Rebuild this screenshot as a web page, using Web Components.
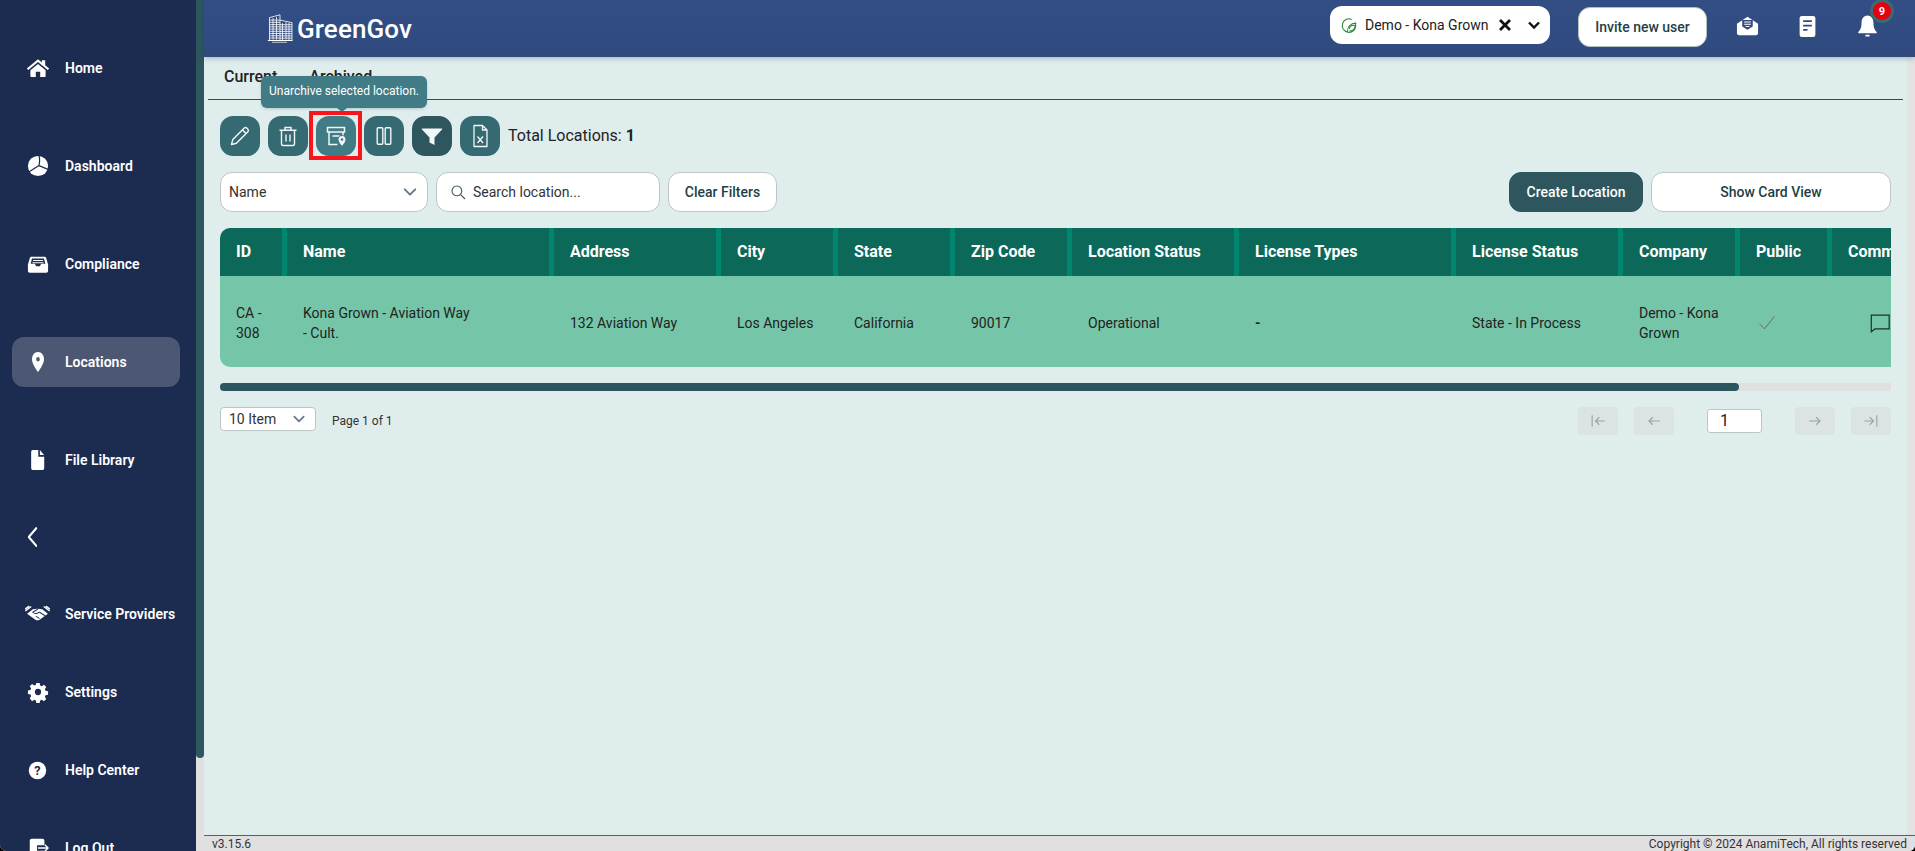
<!DOCTYPE html>
<html lang="en">
<head>
<meta charset="utf-8">
<title>GreenGov - Locations</title>
<style>
  html, body { margin: 0; height: 100%; background: #000; overflow: hidden; }
  body { font-family: Roboto, "Liberation Sans", sans-serif; color: #222; }
</style>
</head>
<body>
<gg-app>
  <gg-sidebar slot="sidebar">
    <gg-nav-item icon="home">Home</gg-nav-item>
    <gg-nav-item icon="pie">Dashboard</gg-nav-item>
    <gg-nav-item icon="tray">Compliance</gg-nav-item>
    <gg-nav-item icon="pin" active>Locations</gg-nav-item>
    <gg-nav-item icon="file">File Library</gg-nav-item>
    <gg-nav-item slot="back" icon="back"></gg-nav-item>
    <gg-nav-item slot="lower" icon="handshake">Service Providers</gg-nav-item>
    <gg-nav-item slot="lower" icon="gear">Settings</gg-nav-item>
    <gg-nav-item slot="lower" icon="help">Help Center</gg-nav-item>
    <gg-nav-item slot="lower" icon="logout">Log Out</gg-nav-item>
  </gg-sidebar>
  <gg-header slot="header"></gg-header>
  <gg-tabs>
    <span>Current</span>
    <span>Archived</span>
  </gg-tabs>
  <gg-toolbar>
    <gg-tool-button icon="pencil"></gg-tool-button>
    <gg-tool-button icon="trash"></gg-tool-button>
    <gg-tool-button icon="unarchive" hovered tip="Unarchive selected location."></gg-tool-button>
    <gg-tool-button icon="columns"></gg-tool-button>
    <gg-tool-button icon="funnel" dark></gg-tool-button>
    <gg-tool-button icon="excel"></gg-tool-button>
    <span slot="total">Total Locations: <b>1</b></span>
  </gg-toolbar>
  <gg-filters></gg-filters>
  <gg-table></gg-table>
  <gg-pager></gg-pager>
  <gg-footer slot="footer"></gg-footer>
</gg-app>

<script>
const ICONS = {
  home: '<path fill="currentColor" d="M12 2.5 .8 12.6l1.5 1.6L12 5.5l9.7 8.7 1.5-1.6-4-3.6V3.6h-3.4V6z"/><path fill="currentColor" d="M12 7.6 4.4 14.4v6.2c0 .7.4 1.1 1.1 1.1h4.3v-5.5h4.4v5.5h4.3c.7 0 1.1-.4 1.1-1.1v-6.2z"/>',
  pie: '<circle cx="12" cy="12" r="11" fill="currentColor"/><path fill="none" stroke="#1c2b50" stroke-width="1.3" d="M13 0C14 4 14 8 13 11.5L23.5 16M13 11.5 2 18.5"/>',
  tray: '<path fill="currentColor" d="M5 3h14c1 0 1.5.5 1.8 1.3L23 12v7.5c0 1.2-.8 2-2 2H3c-1.2 0-2-.8-2-2V12l2.2-7.7C3.5 3.5 4 3 5 3z"/><path fill="#1c2b50" d="M5.5 5h13l1.5 6h-4.500l-1.500 3h-4l-1.500-3H4z"/><path fill="currentColor" d="M6.500 6.800h11V8h-11zM6 9.300h12v1.200H6z"/>',
  pin: '<path fill="currentColor" fill-rule="evenodd" d="M12 1C7 1 4 4.800 4 9c0 5 5.500 11 8 14 2.500-3 8-9 8-14 0-4.200-3-8-8-8zm0 5.600a2.400 2.400 0 1 1 0 4.800 2.400 2.400 0 0 1 0-4.800z"/>',
  file: '<path fill="currentColor" d="M6 1h7v7.500h7.500V21a2 2 0 0 1-2 2H6a2 2 0 0 1-2-2V3a2 2 0 0 1 2-2z"/><path fill="currentColor" d="M15 1.200 20.300 6.500H15z"/>',
  back: '<path fill="none" stroke="currentColor" stroke-width="2.800" stroke-linecap="round" stroke-linejoin="round" d="M18 2.500 6 12l12 9.500"/>',
  handshake: '<path fill="currentColor" d="M7.500 5.500 12 5l4.500.5L22 11.500l-8 8c-1.100 1-2.900 1-4 0l-8-8z"/><path fill="none" stroke="#1c2b50" stroke-width="1.200" stroke-linejoin="round" d="M12.500 5.500 7.500 9.500c1 2 3 2.200 4.500 1.200l1.800-1.200 5.700 5M14 18l-3.500-3"/><path fill="none" stroke="currentColor" stroke-width="1.600" stroke-linecap="round" d="M5.500 2.500 .8 7.500M3.500 2 .5 5M18.500 2.500l4.700 5M20.500 2l3 3"/>',
  gear: '<path fill="currentColor" fill-rule="evenodd" d="M10 1h4l.6 3 2 .9 2.600-1.700 2.800 2.800-1.700 2.600.9 2 3 .6v4l-3 .6-.9 2 1.700 2.600-2.800 2.800-2.600-1.700-2 .9-.6 3h-4l-.6-3-2-.9-2.600 1.700L2 19.500l1.700-2.600-.9-2-3-.6v-4l3-.6.9-2L2 5.100l2.800-2.800 2.600 1.700 2-.9zm2 7.200a3.800 3.800 0 1 0 0 7.600 3.800 3.800 0 0 0 0-7.600z" transform="translate(1.2 1.2) scale(.9)"/>',
  help: '<circle cx="12" cy="12" r="11" fill="currentColor"/><text x="12" y="17.600" text-anchor="middle" font-family="Roboto, sans-serif" font-weight="700" font-size="16" fill="#1c2b50">?</text>',
  logout: '<path fill="currentColor" d="M5 2h12a2 2 0 0 1 2 2v5h-8v6h8v5a2 2 0 0 1-2 2H5a2 2 0 0 1-2-2V4a2 2 0 0 1 2-2z"/><path fill="none" stroke="currentColor" stroke-width="1.600" d="M12 12h11M19.500 8.500 23 12l-3.500 3.500"/>',
  pencil: '<path fill="none" stroke="currentColor" stroke-width="1.400" stroke-linejoin="round" d="M3.500 20.500l1.300-4.900L16.300 4.100a1.800 1.800 0 0 1 2.500 0l1.100 1.100a1.800 1.800 0 0 1 0 2.500L8.400 19.200zM14.500 5.900l3.600 3.600"/>',
  trash: '<path fill="none" stroke="currentColor" stroke-width="1.400" d="M5.500 6.500V20a1.500 1.500 0 0 0 1.500 1.500h10a1.500 1.500 0 0 0 1.500-1.500V6.500M3.500 6.200h17M9 6V3.500h6V6M10 10.500v7M14 10.500v7"/>',
  unarchive: '<path fill="none" stroke="currentColor" stroke-width="1.500" d="M3.500 3.500h17V8h-17zM5 8v12.500h8.500M19 8v5M8.500 12h7"/>',
  columns: '<rect x="5.200" y="3.700" width="5.600" height="16.600" rx="1" fill="none" stroke="currentColor" stroke-width="1.400"/><rect x="13.200" y="3.700" width="5.600" height="16.600" rx="1" fill="none" stroke="currentColor" stroke-width="1.400"/>',
  funnel: '<path fill="currentColor" d="M2.500 4.500h19c.6 0 .9.7.5 1.100L14.500 13.500V21l-5-2.500v-5L2 5.600c-.4-.4-.1-1.100.5-1.100z"/>',
  excel: '<path fill="none" stroke="currentColor" stroke-width="1.300" stroke-linejoin="round" d="M6 1.500h8.500l4.500 4.500v16.500H6zM14.500 1.500V6H19"/><path fill="none" stroke="currentColor" stroke-width="1.300" d="M9.500 12.500l5.500 6.500M15 12.500 9.500 19"/>',
  leaf: '<path fill="none" stroke="#1d8a2c" stroke-width="1.400" stroke-linecap="round" d="M15.500 4.500A9 9 0 1 0 21 13c-3.500-1.500-8-.5-8.500 4"/><path fill="none" stroke="#1d8a2c" stroke-width="1.400" stroke-linecap="round" d="M10 21c-.5-6 4-11.500 11-11.500 0 6-3.500 10-8 10.500"/>',
  search: '<circle cx="10.500" cy="10.500" r="6.500" fill="none" stroke="#47595c" stroke-width="1.500"/><path stroke="#47595c" stroke-width="1.500" stroke-linecap="round" d="M15.500 15.500 21 21"/>',
  chevron: '<path fill="none" stroke="#66788a" stroke-width="2.600" stroke-linecap="round" stroke-linejoin="round" d="M5 8.500l7 7 7-7"/>',
  check: '<path fill="none" stroke="#5c6e68" stroke-width="1.200" d="M3 13l6 6L21 4"/>',
  comment: '<path fill="none" stroke="#1f302e" stroke-width="1.300" d="M2.500 3.500H22v15H6.500l-4 3z"/>',
  first: '<path fill="none" stroke="#98a3a3" stroke-width="1.300" d="M5 5v14M20 12H9M13.500 7.500 9 12l4.500 4.500"/>',
  prev: '<path fill="none" stroke="#98a3a3" stroke-width="1.300" d="M19 12H6M10.500 7.500 6 12l4.500 4.500"/>',
  next: '<path fill="none" stroke="#98a3a3" stroke-width="1.300" d="M5 12h13M13.500 7.500 18 12l-4.500 4.500"/>',
  last: '<path fill="none" stroke="#98a3a3" stroke-width="1.300" d="M19 5v14M4 12h11M10.500 7.500 15 12l-4.500 4.500"/>',
  mail: '<path fill="currentColor" d="M1 9.500 12 2l11 7.500V20a2 2 0 0 1-2 2H3a2 2 0 0 1-2-2z"/><path fill="#314b80" d="M6.500 5.500h11v7L12 16l-5.500-3.500z"/><path fill="currentColor" d="M8.500 7h7v1.200h-7zM8.500 9.500h7v1.200h-7zM10 12h4v1.200h-4z"/>',
  doc: '<rect x="3" y="1" width="18" height="22" rx="2.500" fill="currentColor"/><path fill="none" stroke="#314b80" stroke-width="1.800" d="M7 6.500h10M7 11h10M7 15.500h5"/>',
  bell: '<path fill="currentColor" d="M12 1.500c-4 0-6.800 3-6.800 7.300 0 5-1.500 7.500-3.700 9.200v1.300h21V18c-2.200-1.700-3.700-4.200-3.700-9.200 0-4.300-2.800-7.300-6.800-7.300z"/><rect x="9.500" y="20.800" width="5" height="1.800" rx=".9" fill="currentColor"/>',
  logo: '<g fill="none" stroke="currentColor" stroke-width=".8"><path d="M2.500 25.500V3.500L13 .8v24.700M13 6 25 8.500v17M15.500 25.500V9"/><path d="M2.500 6H13M2.500 8.200H13M2.500 10.400H13M2.500 12.600H13M2.500 14.800H13M2.500 17H13M2.500 19.200H13M2.500 21.400H13M2.500 23.600H13M13 10.500h12M13 12.700h12M13 14.900h12M13 17.100h12M13 19.300h12M13 21.500h12M13 23.700h12M6 4v21M9.500 3v22M19 8v17M22 8.500v17"/><path stroke-width="1.100" d="M.8 26h24.800"/></g><path stroke="currentColor" stroke-width=".7" d="M5 27.800h15"/>'
};

class GgIcon extends HTMLElement {
  connectedCallback() {
    const size = this.getAttribute("size") || 24;
    const name = this.getAttribute("name");
    const box = name === "logo" ? "0 0 26 28.5" : "0 0 24 24";
    this.attachShadow({ mode: "open" }).innerHTML = `
      <style>
        :host { display: inline-flex; flex: none; line-height: 0; }
        svg { display: block; }
      </style>
      <svg width="${size}" height="${this.getAttribute("h") || size}" viewBox="${box}" preserveAspectRatio="none">${ICONS[name] || ""}</svg>`;
  }
}
customElements.define("gg-icon", GgIcon);

class GgApp extends HTMLElement {
  constructor() {
    super();
    this.attachShadow({ mode: "open" }).innerHTML = `
      <style>
        :host {
          display: grid;
          grid-template-columns: 196px 8px 1fr;
          height: 851px;
          overflow: hidden;
          border-radius: 0 0 6px 6px;
          background: #e0e0e0;
        }
        .rail { background: #e0e0e0; }
        .thumb { height: 758px; background: #2d565f; border-radius: 0 0 4px 4px; }
        .main { display: flex; flex-direction: column; min-width: 0; height: 851px; }
        .middle { flex: 1; display: flex; min-height: 0; }
        .content {
          flex: 1;
          min-width: 0;
          background: #dfeded;
          padding: 0 4px;
          display: flex;
          flex-direction: column;
        }
        .vbar { width: 8px; background: #e3e3e3; }
      </style>
      <slot name="sidebar"></slot>
      <div class="rail"><div class="thumb"></div></div>
      <div class="main">
        <slot name="header"></slot>
        <div class="middle">
          <div class="content"><slot></slot></div>
          <div class="vbar"></div>
        </div>
        <slot name="footer"></slot>
      </div>`;
  }
}
customElements.define("gg-app", GgApp);

class GgSidebar extends HTMLElement {
  constructor() {
    super();
    this.attachShadow({ mode: "open" }).innerHTML = `
      <style>
        :host {
          display: block;
          background: #1c2b50;
          height: 851px;
          overflow: hidden;
          box-sizing: border-box;
          padding: 43px 16px 0 12px;
          color: #fff;
        }
        .group { display: flex; flex-direction: column; gap: 48px; }
        .back { margin: 39px 0 0; height: 26px; display: flex; }
        .lower { display: flex; flex-direction: column; gap: 28px; margin-top: 39px; }
      </style>
      <div class="group"><slot></slot></div>
      <div class="back"><slot name="back"></slot></div>
      <div class="lower"><slot name="lower"></slot></div>`;
  }
}
customElements.define("gg-sidebar", GgSidebar);

class GgNavItem extends HTMLElement {
  connectedCallback() {
    const icon = this.getAttribute("icon");
    const sizes = { home: [24, 22], pie: [22, 22], tray: [22, 21], pin: [18, 22], file: [19, 22], back: [15, 22], handshake: [25, 18], gear: [22, 22], help: [19, 19], logout: [22, 22] };
    const [w, h] = sizes[icon] || [22, 22];
    this.attachShadow({ mode: "open" }).innerHTML = `
      <style>
        :host {
          display: flex;
          align-items: center;
          height: 50px;
          border-radius: 12px;
          color: #fff;
          font-size: 14px;
          font-weight: 600;
          white-space: nowrap;
        }
        :host([active]) { background: #4c5774; }
        :host([slot="back"]) { height: 26px; }
        :host([slot="back"]) .ico { width: 40px; }
        .ico { width: 51px; margin-right: 2px; display: flex; justify-content: center; box-sizing: border-box; }
      </style>
      <span class="ico"><gg-icon name="${icon}" size="${w}" h="${h}"></gg-icon></span>
      <slot></slot>`;
  }
}
customElements.define("gg-nav-item", GgNavItem);

class GgHeader extends HTMLElement {
  constructor() {
    super();
    this.attachShadow({ mode: "open" }).innerHTML = `
      <style>
        :host {
          display: flex;
          flex: none;
          height: 57px;
          background: linear-gradient(#324e85, #304a7e);
          color: #fff;
          box-shadow: 0 2px 5px rgba(30, 50, 60, .25);
          position: relative;
          z-index: 2;
          padding: 0 18px 0 63px;
        }
        .brand { display: flex; align-items: center; gap: 4px; font-size: 26px; font-weight: 500; letter-spacing: .1px; }
        .right { margin-left: auto; display: flex; align-items: flex-start; }
        .chip {
          width: 220px;
          height: 38px;
          margin-top: 6px;
          background: #fff;
          border-radius: 12px;
          display: flex;
          align-items: center;
          color: #222;
          font-size: 14px;
          padding-left: 10px;
          box-sizing: border-box;
        }
        .chip span { margin-left: 7px; }
        .clear { margin-left: 10px; }
        .chev { margin-left: 15px; }
        .invite {
          width: 129px;
          height: 40px;
          margin: 7px 0 0 28px;
          background: #fff;
          border: 1px solid #b5c2bc;
          border-radius: 12px;
          box-sizing: border-box;
          display: flex;
          align-items: center;
          justify-content: center;
          font-size: 14px;
          font-weight: 500;
          color: #1f3f46;
        }
        .icons { display: flex; margin-left: 10px; }
        .slot { width: 60px; height: 52px; display: flex; justify-content: center; align-items: center; position: relative; }
        .badge {
          position: absolute;
          left: 36px;
          top: 2px;
          width: 18px;
          height: 18px;
          border-radius: 50%;
          background: #e8000f;
          box-shadow: 0 0 0 3px #3a6a74;
          color: #fff;
          font-size: 11px;
          font-weight: 700;
          display: flex;
          align-items: center;
          justify-content: center;
        }
      </style>
      <div class="brand"><gg-icon name="logo" size="26" h="29"></gg-icon>GreenGov</div>
      <div class="right">
        <div class="chip">
          <gg-icon name="leaf" size="18"></gg-icon>
          <span>Demo - Kona Grown</span>
          <svg class="clear" width="14" height="14" viewBox="0 0 14 14"><path d="M2 2l10 10M12 2 2 12" stroke="#111" stroke-width="2.800"/></svg>
          <svg class="chev" width="14" height="14" viewBox="0 0 14 14"><path d="M2 4.500l5 5 5-5" fill="none" stroke="#111" stroke-width="2.400"/></svg>
        </div>
        <div class="invite">Invite new user</div>
        <div class="icons">
          <div class="slot"><gg-icon name="mail" size="23" h="22"></gg-icon></div>
          <div class="slot"><gg-icon name="doc" size="21" h="23"></gg-icon></div>
          <div class="slot"><gg-icon name="bell" size="21" h="24"></gg-icon><div class="badge">9</div></div>
        </div>
      </div>`;
  }
}
customElements.define("gg-header", GgHeader);

class GgTabs extends HTMLElement {
  constructor() {
    super();
    this.attachShadow({ mode: "open" }).innerHTML = `
      <style>
        :host {
          display: flex;
          gap: 32px;
          align-items: center;
          padding: 0 0 4px 16px;
          box-sizing: border-box;
          border-bottom: 1px solid #2d4a6b;
          flex: none;
          font-size: 16px;
          font-weight: 500;
          color: #222;
          height: 43px;
        }
      </style>
      <slot></slot>`;
  }
}
customElements.define("gg-tabs", GgTabs);

class GgToolbar extends HTMLElement {
  constructor() {
    super();
    this.attachShadow({ mode: "open" }).innerHTML = `
      <style>
        :host {
          display: flex;
          align-items: center;
          gap: 8px;
          margin: 16px 0 0 12px;
          height: 40px;
          flex: none;
        }
        .total { font-size: 16px; color: #222; padding-bottom: 1px; }
      </style>
      <slot></slot>
      <span class="total"><slot name="total"></slot></span>`;
  }
}
customElements.define("gg-toolbar", GgToolbar);

class GgToolButton extends HTMLElement {
  connectedCallback() {
    const tip = this.getAttribute("tip");
    this.attachShadow({ mode: "open" }).innerHTML = `
      <style>
        :host {
          display: flex;
          position: relative;
          width: 40px;
          height: 40px;
          flex: none;
          align-items: center;
          justify-content: center;
          border-radius: 13px;
          background: #356a72;
          color: #f2f8f8;
        }
        :host([dark]) { background: #2d565f; }
        :host([hovered]) { background: #417b85; }
        .mark {
          position: absolute;
          left: -7px;
          top: -5px;
          width: 53px;
          height: 49px;
          box-sizing: border-box;
          border: 4px solid #f8151b;
        }
        .tip {
          position: absolute;
          left: -55px;
          top: -40px;
          width: 166px;
          height: 32px;
          box-sizing: border-box;
          background: #417b85;
          color: #fff;
          border-radius: 6px;
          font-size: 12px;
          padding-bottom: 2px;
          display: flex;
          align-items: center;
          justify-content: center;
          white-space: nowrap;
          box-shadow: 0 1px 3px rgba(30, 50, 60, .2);
        }
        .tip::after {
          content: "";
          position: absolute;
          left: 76px;
          bottom: -4px;
          border: 5px solid transparent;
          border-bottom: 0;
          border-top: 4px solid #417b85;
        }
        .pin { position: absolute; left: 21px; top: 19px; }
      </style>
      <gg-icon name="${this.getAttribute("icon")}" size="24"></gg-icon>
      ${this.getAttribute("icon") === "unarchive" ? `<svg class="pin" width="10" height="12" viewBox="0 0 10 12"><path fill="#f2f8f8" stroke="#417b85" d="M5 .5C2.500.5 1 2.300 1 4.500c0 2.500 2.500 5 4 7 1.500-2 4-4.500 4-7C9 2.300 7.500.5 5 .5z"/><circle cx="5" cy="4.500" r="1.300" fill="#417b85"/></svg>` : ""}
      ${tip ? `<div class="tip">${tip}</div><div class="mark"></div>` : ""}`;
  }
}
customElements.define("gg-tool-button", GgToolButton);

class GgFilters extends HTMLElement {
  constructor() {
    super();
    this.attachShadow({ mode: "open" }).innerHTML = `
      <style>
        :host {
          display: flex;
          gap: 8px;
          margin: 16px 12px 0 12px;
          flex: none;
          font-size: 14px;
        }
        .box {
          height: 40px;
          box-sizing: border-box;
          background: #fff;
          border: 1px solid #bcc7c4;
          border-radius: 12px;
          display: flex;
          align-items: center;
          color: #333;
        }
        .select { width: 208px; padding: 0 8px; justify-content: space-between; }
        .search { width: 224px; padding: 0 12px; gap: 6px; }
        .clear { width: 109px; justify-content: center; font-weight: 500; color: #1f3f46; }
        .spacer { flex: 1; }
        .create {
          width: 134px;
          background: #2d565f;
          border-color: #2d565f;
          color: #fff;
          font-weight: 500;
          justify-content: center;
        }
        .card { width: 240px; justify-content: center; font-weight: 500; color: #1f3f46; }
      </style>
      <div class="box select">Name <gg-icon name="chevron" size="18"></gg-icon></div>
      <div class="box search"><gg-icon name="search" size="18"></gg-icon>Search location...</div>
      <div class="box clear">Clear Filters</div>
      <div class="spacer"></div>
      <div class="box create">Create Location</div>
      <div class="box card">Show Card View</div>`;
  }
}
customElements.define("gg-filters", GgFilters);

class GgTable extends HTMLElement {
  constructor() {
    super();
    const columns = [
      ["ID", 67, "CA - 308"],
      ["Name", 267, '<span style="display:block;max-width:168px">Kona Grown - Aviation Way - Cult.</span>'],
      ["Address", 167, "132 Aviation Way"],
      ["City", 117, "Los Angeles"],
      ["State", 117, "California"],
      ["Zip Code", 117, "90017"],
      ["Location Status", 167, "Operational"],
      ["License Types", 217, "<b>-</b>"],
      ["License Status", 167, "State - In Process"],
      ["Company", 117, "Demo - Kona Grown"],
      ["Public", 92, '<gg-icon name="check" size="20" style="margin-left:1px"></gg-icon>'],
      ["Comments", 226, '<gg-icon name="comment" size="22" style="margin-left:21px"></gg-icon>']
    ];
    const heads = columns.map(c => `<div class="th">${c[0]}</div>`).join("");
    const cells = columns.map(c => `<div class="td">${c[2]}</div>`).join("");
    this.attachShadow({ mode: "open" }).innerHTML = `
      <style>
        :host { display: block; margin: 16px 12px 0 12px; flex: none; overflow: hidden; }
        .clip { overflow: hidden; border-radius: 10px 0 0 10px; }
        .grid {
          display: grid;
          width: 1838px;
          grid-template-columns: ${columns.map(c => c[1] + "px").join(" ")};
          grid-template-rows: 48px 91px;
        }
        .th, .td { box-sizing: border-box; padding: 0 16px; display: flex; align-items: center; }
        .th {
          background: #0c6858;
          border-right: 5px solid #00856f;
          color: #fff;
          font-size: 16px;
          font-weight: 700;
          white-space: nowrap;
          padding-bottom: 2px;
        }
        .td {
          background: #75c6a8;
          color: #222;
          font-size: 14px;
          line-height: 20px;
          padding-right: 21px;
          padding-top: 2px;
        }
        .bar { height: 8px; background: #e0e0e0; margin-top: 16px; }
        .thumb { width: 1519px; height: 8px; background: #2d565f; border-radius: 4px; }
      </style>
      <div class="clip"><div class="grid">${heads}${cells}</div></div>
      <div class="bar"><div class="thumb"></div></div>`;
  }
}
customElements.define("gg-table", GgTable);

class GgPager extends HTMLElement {
  constructor() {
    super();
    this.attachShadow({ mode: "open" }).innerHTML = `
      <style>
        :host {
          display: flex;
          align-items: flex-start;
          margin: 16px 12px 0 12px;
          flex: none;
        }
        .size {
          width: 96px;
          height: 24px;
          box-sizing: border-box;
          background: #fff;
          border: 1px solid #bcc7c4;
          border-radius: 4px;
          padding: 0 8px;
          display: flex;
          align-items: center;
          justify-content: space-between;
          font-size: 14px;
          color: #333;
        }
        .label { margin-left: 16px; height: 28px; line-height: 28px; font-size: 12px; color: #333; }
        .nav { margin-left: auto; display: flex; }
        .btn {
          width: 40px;
          height: 28px;
          background: #dbe3e3;
          border-radius: 4px;
          display: flex;
          align-items: center;
          justify-content: center;
        }
        .btn + .btn { margin-left: 16px; }
        .page {
          width: 55px;
          height: 24px;
          margin: 2px 33px 0 33px;
          box-sizing: border-box;
          background: #fff;
          border: 1px solid #bcc7c4;
          border-radius: 3px;
          padding-left: 12px;
          font-size: 16px;
          line-height: 22px;
          color: #222;
        }
      </style>
      <div class="size">10 Item <gg-icon name="chevron" size="16"></gg-icon></div>
      <div class="label">Page 1 of 1</div>
      <div class="nav">
        <div class="btn"><gg-icon name="first" size="20"></gg-icon></div>
        <div class="btn"><gg-icon name="prev" size="20"></gg-icon></div>
        <div class="page">1</div>
        <div class="btn"><gg-icon name="next" size="20"></gg-icon></div>
        <div class="btn"><gg-icon name="last" size="20"></gg-icon></div>
      </div>`;
  }
}
customElements.define("gg-pager", GgPager);

class GgFooter extends HTMLElement {
  constructor() {
    super();
    this.attachShadow({ mode: "open" }).innerHTML = `
      <style>
        :host {
          display: flex;
          justify-content: space-between;
          align-items: center;
          flex: none;
          height: 16px;
          box-sizing: border-box;
          border-top: 1px solid #3c6a74;
          background: #e0e0e0;
          padding: 0 8px;
          font-size: 12px;
          color: #333;
        }
      </style>
      <span>v3.15.6</span>
      <span>Copyright © 2024 AnamiTech, All rights reserved</span>`;
  }
}
customElements.define("gg-footer", GgFooter);
</script>
</body>
</html>
